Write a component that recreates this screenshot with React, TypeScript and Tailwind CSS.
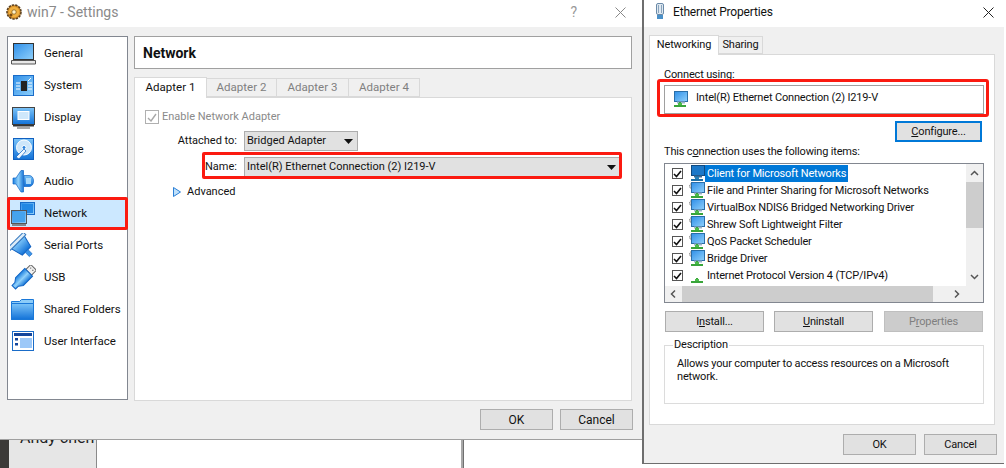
import React from "react";

const LEFT = { fontFamily: 'Roboto, "Noto Sans", sans-serif' };
const RIGHT = { fontFamily: 'Roboto, "Liberation Sans", Arial, sans-serif' };

function Defs() {
  return (
    <svg className="absolute w-0 h-0" aria-hidden="true">
      <defs>
        <linearGradient id="blue" x1="0" y1="0" x2="0" y2="1">
          <stop offset="0" stopColor="#7cc4f8" />
          <stop offset="1" stopColor="#1272d8" />
        </linearGradient>
        <linearGradient id="blueH" x1="0" y1="0" x2="1" y2="0">
          <stop offset="0" stopColor="#1b7fe0" />
          <stop offset="0.5" stopColor="#8fd0fa" />
          <stop offset="1" stopColor="#1a78d8" />
        </linearGradient>
        <linearGradient id="screen" x1="0" y1="0" x2="1" y2="1">
          <stop offset="0" stopColor="#2f8fe8" />
          <stop offset="1" stopColor="#8fd0fb" />
        </linearGradient>
      </defs>
    </svg>
  );
}

function Ico({ children }: { children: React.ReactNode }) {
  return (
    <svg width="26" height="26" viewBox="0 0 26 26" className="shrink-0">
      {children}
    </svg>
  );
}

const GeneralIcon = () => (
  <Ico>
    <rect x="3.5" y="2.5" width="20" height="16" fill="url(#screen)" stroke="#333" />
    <path d="M1.5 19.5h24v3.5h-24z" fill="#e8e8e8" stroke="#555" />
  </Ico>
);
const SystemIcon = () => (
  <Ico>
    <rect x="3.5" y="2.5" width="20" height="20" fill="url(#screen)" stroke="#1a6cc8" />
    <rect x="11" y="8" width="6" height="10" fill="#222" />
    <path d="M6 10h4M6 13h4M6 16h4M18 10h4M18 13h4M18 16h4M18 8l3-3" stroke="#fff" />
  </Ico>
);
const DisplayIcon = () => (
  <Ico>
    <rect x="2.5" y="2.5" width="22" height="17" fill="url(#blue)" stroke="#444" />
    <rect x="8" y="6.5" width="11" height="8" fill="#cfe8fb" stroke="#fff" />
    <path d="M3 20.5h21" stroke="#333" strokeWidth="2" />
    <path d="M7 23h13" stroke="#888" strokeWidth="1.5" />
  </Ico>
);
const StorageIcon = () => (
  <Ico>
    <rect x="3.5" y="1.5" width="20" height="21" fill="url(#blue)" stroke="#1060c0" />
    <circle cx="14" cy="10.5" r="7.5" fill="#cde6fa" stroke="#fff" />
    <circle cx="14" cy="10.5" r="2" fill="#2a82dc" stroke="#fff" />
    <path d="M6 20l8-8 2 2-7 8z" fill="#eef7ff" stroke="#1060c0" strokeWidth="0.7" />
  </Ico>
);
const AudioIcon = () => (
  <Ico>
    <path d="M3 9h3L11 1.5h2.5V23H11L6 15H3z" fill="url(#blueH)" stroke="#1064c4" strokeWidth="0.7" />
    <path d="M14 6.5h5c3 0 4.5 2.5 4.5 5.5s-1.5 5.5-4.5 5.5h-5z" fill="url(#blue)" stroke="#1064c4" strokeWidth="0.7" />
    <rect x="16" y="9" width="5" height="6" fill="#a8d8fa" />
  </Ico>
);
const NetworkIcon = () => (
  <Ico>
    <rect x="10.5" y="1.5" width="14" height="12" fill="url(#screen)" stroke="#1a6cc8" />
    <rect x="12" y="3" width="11" height="9" fill="#2388e4" />
    <rect x="1.5" y="9.5" width="15" height="13" fill="url(#screen)" stroke="#555" />
    <rect x="3" y="11" width="12" height="10" fill="#45a3ee" />
    <path d="M2 24h14" stroke="#666" strokeWidth="1.5" />
  </Ico>
);
const SerialIcon = () => (
  <Ico>
    <g transform="rotate(-45 13 13)">
      <path d="M3 7h18l-3 12H6z" fill="url(#blue)" stroke="#1060c0" />
      <rect x="1" y="3.5" width="22" height="3.5" fill="#dcecf8" stroke="#3a7cc0" />
      <rect x="10" y="19" width="4" height="6" fill="#3b93e6" stroke="#1060c0" strokeWidth="0.6" />
    </g>
  </Ico>
);
const UsbIcon = () => (
  <Ico>
    <g transform="rotate(45 13 13)">
      <rect x="9" y="-2" width="8" height="7" fill="#f0f0f0" stroke="#666" />
      <path d="M7.5 5h11v13l-3 4v4h-5v-4l-3-4z" fill="url(#blueH)" stroke="#1064c4" />
      <path d="M11 0.5h1M14 0.5h1" stroke="#333" />
    </g>
  </Ico>
);
const FolderIcon = () => (
  <Ico>
    <path d="M1.5 4.5h8l2-2h12v20h-22z" fill="#8cccf8" stroke="#1a78d8" />
    <path d="M1.5 6.5h22v16h-22z" fill="url(#blue)" stroke="#1a78d8" />
  </Ico>
);
const UiIcon = () => (
  <Ico>
    <rect x="2.5" y="2.5" width="21" height="19" fill="#fff" stroke="#1a6cc8" />
    <rect x="4" y="4" width="18" height="3" fill="#14469c" />
    <rect x="5" y="9" width="3" height="2.5" fill="#14469c" />
    <rect x="5" y="14" width="3" height="2.5" fill="#14469c" />
    <rect x="10" y="9" width="12" height="10" fill="#9cc8f8" />
  </Ico>
);

const settings: [string, React.FC][] = [
  ["General", GeneralIcon],
  ["System", SystemIcon],
  ["Display", DisplayIcon],
  ["Storage", StorageIcon],
  ["Audio", AudioIcon],
  ["Network", NetworkIcon],
  ["Serial Ports", SerialIcon],
  ["USB", UsbIcon],
  ["Shared Folders", FolderIcon],
  ["User Interface", UiIcon],
];

const Caret = ({ className = "" }: { className?: string }) => (
  <svg width="9" height="5" viewBox="0 0 9 5" className={className}>
    <path d="M0 0h9L4.5 5z" fill="#111" />
  </svg>
);

function LeftButton({ label }: { label: string }) {
  return (
    <button className="w-[73px] h-[21px] bg-[#e1e1e1] border border-[#adadad] text-[12px] text-[#111] leading-none">
      {label}
    </button>
  );
}

function Combo({ label, className }: { label: string; className: string }) {
  return (
    <div className={`h-[20px] bg-[#e1e1e1] border border-[#adadad] flex items-center justify-between pl-[2px] pr-[4px] text-[#111] ${className}`}>
      <span>{label}</span>
      <Caret />
    </div>
  );
}

function SettingsWindow() {
  return (
    <div style={LEFT} className="relative h-[440px] flex flex-col bg-[#f0f0f0] border-b border-[#a0a0a0] text-[11px] text-[#111]">
      <div className="h-[27px] bg-white flex items-center pl-[6px] pr-[16px] pb-[3px] shrink-0">
        <svg width="16" height="16" viewBox="0 0 16 16">
          <circle cx="8" cy="8" r="7" fill="#d89028" stroke="#5a4020" strokeWidth="1.6" strokeDasharray="2.4 1" />
          <circle cx="8" cy="8" r="5.3" fill="#f0b040" />
          <circle cx="8" cy="8" r="2.2" fill="#fff2c8" stroke="#7a5010" strokeWidth="0.7" />
          <circle cx="5" cy="11" r="1.5" fill="#7a4a10" />
        </svg>
        <span className="ml-[5px] text-[14px] text-[#8a8a8a]">win7 - Settings</span>
        <span className="ml-auto mr-[38px] text-[14px] text-[#999]">?</span>
        <svg width="11" height="11" viewBox="0 0 11 11">
          <path d="M.5.5l10 10M10.5.5l-10 10" stroke="#888" />
        </svg>
      </div>
      <div className="flex pl-[7px] pt-[9px] gap-[6px]">
        <div className="w-[121px] h-[364px] bg-white border border-[#828790] pt-[1px] shrink-0 text-[11.5px]">
          {settings.map(([name, Icon]) => (
            <div key={name} className={`h-[32px] flex items-center pl-[2px] ${name === "Network" ? "bg-[#cce8ff]" : ""}`}>
              <Icon />
              <span className="ml-[8px] whitespace-nowrap">{name}</span>
            </div>
          ))}
        </div>
        <div className="w-[498px]">
          <div className="h-[33px] bg-white border border-[#a0a0a0] flex items-center pl-[8px] pt-[2px] font-bold text-[14px]">Network</div>
          <div className="flex items-end h-[21px] mt-[7px] text-[#808080] text-[11.5px]">
            <div className="w-[73px] h-[21px] bg-white border border-b-0 border-[#d9d9d9] text-[#111] flex items-center justify-center z-10 -mb-px">Adapter 1</div>
            {[["Adapter 2", "w-[70px]"], ["Adapter 3", "w-[72px]"], ["Adapter 4", "w-[71px]"]].map(([t, w]) => (
              <div key={t} className={`${w} h-[19px] bg-[#f0f0f0] border border-l-0 border-[#d9d9d9] flex items-center justify-center`}>{t}</div>
            ))}
          </div>
          <div className="h-[304px] bg-white border border-[#d9d9d9] pt-[12px]">
            <div className="flex items-center pl-[10px] h-[14px] text-[#8a8a8a]">
              <span className="w-[14px] h-[14px] border border-[#b0b0b0] flex items-center justify-center">
                <svg width="10" height="9" viewBox="0 0 10 9"><path d="M1 5l3 3 5-7" fill="none" stroke="#a8a8a8" strokeWidth="1.4" /></svg>
              </span>
              <span className="ml-[3px]">Enable Network Adapter</span>
            </div>
            <div className="flex items-center mt-[7px]">
              <span className="w-[102px] text-right">Attached to:</span>
              <Combo label="Bridged Adapter" className="ml-[7px] w-[114px]" />
            </div>
            <div className="flex items-center mt-[6px]">
              <span className="w-[102px] text-right">Name:</span>
              <Combo label="Intel(R) Ethernet Connection (2) I219-V" className="ml-[7px] w-[377px]" />
            </div>
            <div className="flex items-center mt-[7px] pl-[38px]">
              <svg width="8" height="10" viewBox="0 0 8 10"><path d="M.5.5l7 4.5-7 4.5z" fill="#bfe0fa" stroke="#2a7fd6" /></svg>
              <span className="ml-[6px]">Advanced</span>
            </div>
          </div>
        </div>
      </div>
      <div className="flex justify-end gap-[7px] pr-[9px] mt-[8px]">
        <LeftButton label="OK" />
        <LeftButton label="Cancel" />
      </div>
      <div className="absolute left-[7px] top-[197px] w-[121px] h-[33px] border-[3px] border-[#fb1a10] rounded-[2px]" />
      <div className="absolute left-[202px] top-[152px] w-[420px] h-[27px] border-[3px] border-[#fb1a10] rounded-[2px]" />
    </div>
  );
}

function BackgroundStrip() {
  return (
    <div className="flex-1 flex bg-white overflow-hidden">
      <div className="w-[9px] bg-[#3c3a38]" />
      <div style={LEFT} className="w-[88px] h-[40px] bg-[#e6e6e6] border-r border-[#8a8a8a] overflow-hidden text-[16px] text-[#222] leading-none pl-[11px] -mt-[12px] whitespace-nowrap">
        <div className="pt-[2px]">Andy chen</div>
      </div>
      <div className="ml-[364px] w-[3px] bg-[#a8a8a8] border-r border-[#707070]" />
    </div>
  );
}

function WinBtn({ children, className = "" }: { children: React.ReactNode; className?: string }) {
  return (
    <button className={`h-[21px] bg-[#e1e1e1] border border-[#adadad] text-[11px] text-[#111] leading-none ${className}`}>
      {children}
    </button>
  );
}

const NicIcon = ({ plain = false, gear = false, selected = false }: { plain?: boolean; gear?: boolean; selected?: boolean }) => (
  <svg width="16" height="17" viewBox="0 0 16 17" className="shrink-0">
    {gear && <circle cx="3" cy="4" r="2.6" fill="#ccc" stroke="#888" strokeDasharray="1.5 1" />}
    {!plain && (
      <>
        <rect x="2.5" y="0.5" width="13" height="10" fill={selected ? "#1c78c8" : "url(#screen)"} stroke={selected ? "#104a80" : "#2a6ea8"} />
        <rect x="5" y="10.5" width="8" height="2" fill={selected ? "#3a6a94" : "#9ab4c8"} />
      </>
    )}
    <path d="M8 11v3M2 15h12" stroke={selected ? "#1d6fa5" : "#39a53a"} strokeWidth="2" />
    <path d="M6 12h4v2H6z" fill={selected ? "#2680b8" : "#4cbb4a"} />
  </svg>
);

const items = [
  "Client for Microsoft Networks",
  "File and Printer Sharing for Microsoft Networks",
  "VirtualBox NDIS6 Bridged Networking Driver",
  "Shrew Soft Lightweight Filter",
  "QoS Packet Scheduler",
  "Bridge Driver",
  "Internet Protocol Version 4 (TCP/IPv4)",
];

function ItemList() {
  return (
    <div className="relative mt-[5px] ml-[14px] w-[320px] h-[140px] bg-white border border-[#828790] flex flex-col">
      <div className="flex h-[122px]">
        <div className="flex-1 overflow-hidden pl-[1px] pt-[1px]">
          {items.map((t, i) => (
            <div key={t} className="h-[17px] flex items-center">
              <span className="ml-[6px] w-[11px] h-[11px] bg-white border border-[#555] flex items-center justify-center shrink-0">
                <svg width="9" height="8" viewBox="0 0 9 8"><path d="M1 4l2.5 2.5L8 1" fill="none" stroke="#111" strokeWidth="1.6" /></svg>
              </span>
              <span className="ml-[6px]"><NicIcon plain={i === 6} gear={i > 0 && i < 6} selected={i === 0} /></span>
              <span className={`whitespace-nowrap h-[17px] flex items-center px-[2px] pt-[2px] ${i === 0 ? "bg-[#0078d7] text-white w-[143px]" : ""}`}>{t}</span>
            </div>
          ))}
        </div>
        <div className="w-[17px] bg-[#f0f0f0] flex flex-col items-center shrink-0">
          <svg width="9" height="18" viewBox="0 0 9 18"><path d="M1 11l3.5-3.5L8 11" fill="none" stroke="#555" strokeWidth="1.5" /></svg>
          <div className="w-full h-[46px] bg-[#cdcdcd]" />
          <svg width="9" height="18" viewBox="0 0 9 18" className="mt-auto"><path d="M1 7l3.5 3.5L8 7" fill="none" stroke="#555" strokeWidth="1.5" /></svg>
        </div>
      </div>
      <div className="h-[16px] bg-[#f0f0f0] flex items-center">
        <svg width="17" height="16" viewBox="0 0 17 16" className="shrink-0"><path d="M10 4.5L6.5 8l3.5 3.5" fill="none" stroke="#555" strokeWidth="1.5" /></svg>
        <div className="w-[251px] h-full bg-[#cdcdcd]" />
        <svg width="17" height="16" viewBox="0 0 17 16" className="ml-[15px] shrink-0"><path d="M7 4.5L10.5 8 7 11.5" fill="none" stroke="#555" strokeWidth="1.5" /></svg>
      </div>
    </div>
  );
}

function EthernetWindow() {
  return (
    <div style={RIGHT} className="relative w-[362px] h-[464px] bg-[#f0f0f0] border-l-2 border-b border-[#6e6e6e] flex flex-col text-[11px] tracking-[-0.17px] text-[#111] shrink-0">
      <div className="h-[27px] bg-white flex items-center pl-[10px] pr-[10px] pb-[3px] shrink-0">
        <svg width="12" height="18" viewBox="0 0 12 18">
          <rect x="2.5" y="0.5" width="7" height="11" rx="1.5" fill="#dfe8f0" stroke="#6a8aa8" />
          <path d="M4.5 2v8M7.5 2v8" stroke="#8aa4bc" />
          <path d="M3 12h6v4H3z" fill="#4a90c8" />
        </svg>
        <span className="ml-[7px] text-[12px]">Ethernet Properties</span>
        <svg width="11" height="11" viewBox="0 0 11 11" className="ml-auto">
          <path d="M.5.5l10 10M10.5.5l-10 10" stroke="#222" />
        </svg>
      </div>
      <div className="flex items-end h-[20px] mt-[7px] ml-[5px] shrink-0">
        <div className="w-[70px] h-[20px] bg-white border border-b-0 border-[#d9d9d9] flex items-center justify-center z-10 -mb-px">Networking</div>
        <div className="w-[44px] h-[18px] bg-[#f0f0f0] border border-l-0 border-[#d9d9d9] flex items-center justify-center">Sharing</div>
      </div>
      <div className="ml-[5px] w-[346px] h-[371px] bg-white border border-[#d9d9d9] shrink-0">
        <div className="ml-[14px] mt-[13px] leading-[14px]">Connect using:</div>
        <div className="ml-[14px] mt-[3px] w-[320px] h-[29px] border border-[#a0a0a0] flex items-center pl-[7px]">
          <NicIcon />
          <span className="ml-[8px] -mt-[2px]">Intel(R) Ethernet Connection (2) I219-V</span>
        </div>
        <WinBtn className="block ml-[245px] mt-[7px] !w-[87px] !border-2 !border-[#0078d7]">
          <u>C</u>onfigure...
        </WinBtn>
        <div className="ml-[14px] mt-[3px] leading-[14px]">This c<u>o</u>nnection uses the following items:</div>
        <div className="-mt-[1px]"><ItemList /></div>
        <div className="flex ml-[15px] mt-[8px] gap-[10px]">
          <WinBtn className="w-[99px]">I<u>n</u>stall...</WinBtn>
          <WinBtn className="w-[99px]"><u>U</u>ninstall</WinBtn>
          <button className="w-[99px] h-[21px] bg-[#cccccc] border border-[#bfbfbf] text-[11px] text-[#7f7f7f] leading-none ml-[1px]">P<u>r</u>operties</button>
        </div>
        <fieldset className="ml-[14px] mt-[5px] w-[320px] h-[67px] border border-[#dcdcdc] pl-[8px] pr-[2px]">
          <legend className="px-[1px] leading-[16px]">Description</legend>
          <div className="pl-[4px] pt-[4px] leading-[13px]">Allows your computer to access resources on a Microsoft network.</div>
        </fieldset>
      </div>
      <div className="flex justify-end gap-[8px] pr-[7px] mt-[9px]">
        <WinBtn className="w-[73px]">OK</WinBtn>
        <WinBtn className="w-[73px]">Cancel</WinBtn>
      </div>
      <div className="absolute left-[13px] top-[79px] w-[332px] h-[38px] border-[3px] border-[#fb1a10] rounded-[3px]" />
    </div>
  );
}

export default function App() {
  return (
    <div className="relative w-[1006px] h-[468px] bg-white flex overflow-hidden">
      <Defs />
      <div className="w-[642px] h-[468px] flex flex-col shrink-0">
        <SettingsWindow />
        <BackgroundStrip />
      </div>
      <EthernetWindow />
    </div>
  );
}
